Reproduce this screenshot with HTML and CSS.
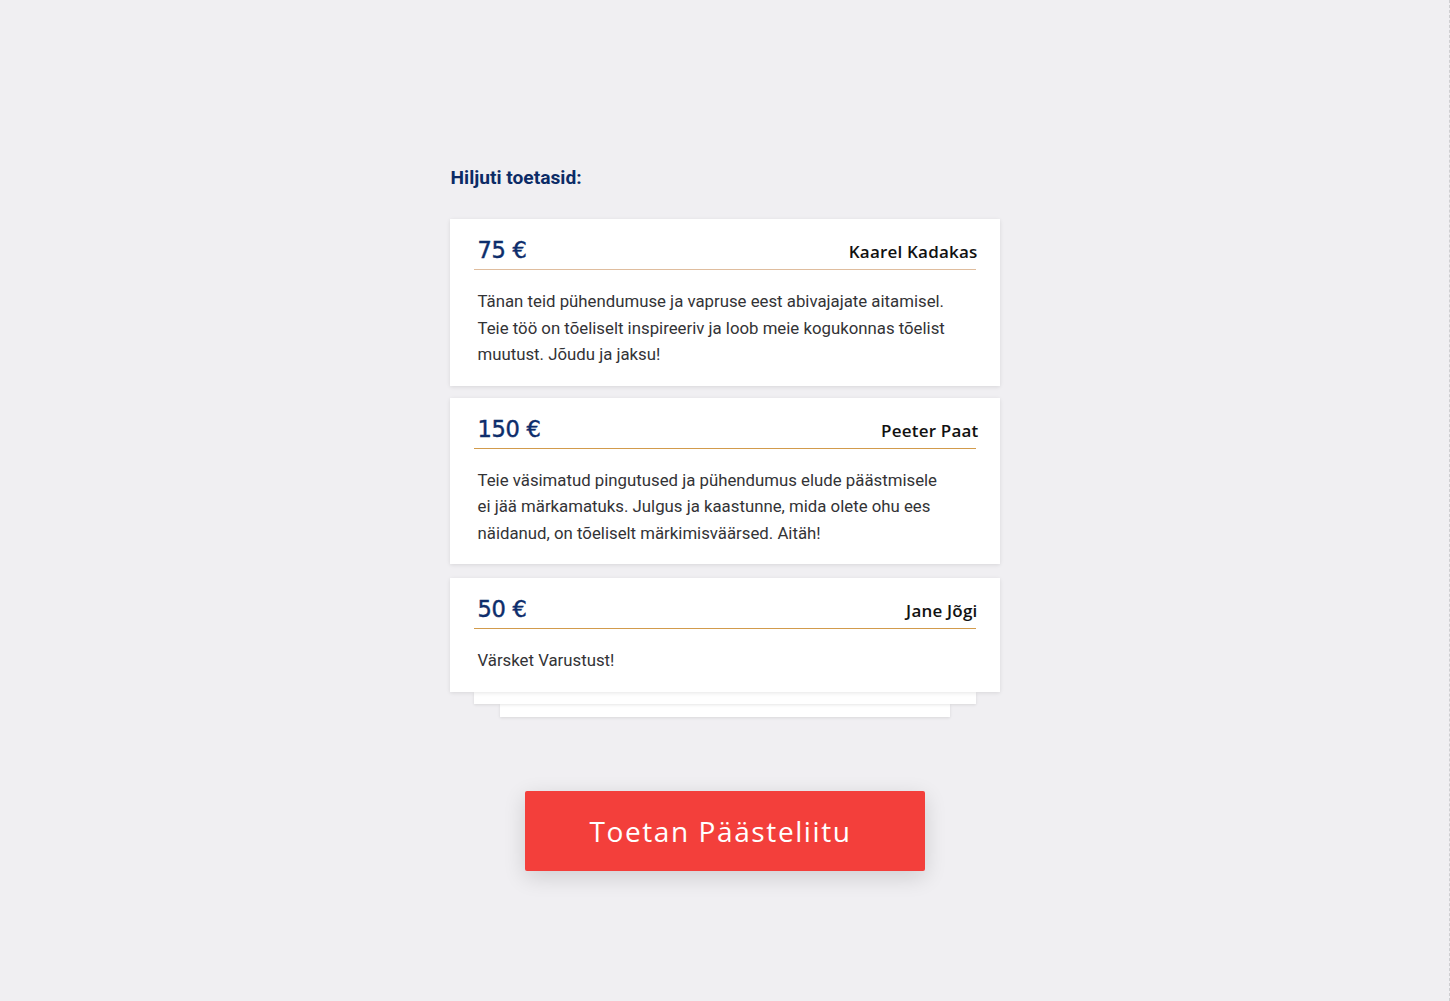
FILE: index.html
```html
<!DOCTYPE html>
<html lang="et">
<head>
<meta charset="utf-8">
<title>Hiljuti toetasid</title>
<link rel="stylesheet" href="styles.css">
</head>
<body>
<main class="page">
  <h2 class="title">Hiljuti toetasid:</h2>
  <div class="list">
    <article class="card">
      <div class="card-head head-light">
        <span class="amount">75 €</span>
        <span class="name">Kaarel Kadakas</span>
      </div>
      <p class="msg">Tänan teid pühendumuse ja vapruse eest abivajajate aitamisel. Teie töö on tõeliselt inspireeriv ja loob meie kogukonnas tõelist muutust. Jõudu ja jaksu!</p>
    </article>
    <article class="card">
      <div class="card-head">
        <span class="amount">150 €</span>
        <span class="name name-over">Peeter Paat</span>
      </div>
      <p class="msg">Teie väsimatud pingutused ja pühendumus elude päästmisele ei jää märkamatuks. Julgus ja kaastunne, mida olete ohu ees näidanud, on tõeliselt märkimisväärsed. Aitäh!</p>
    </article>
    <article class="card card-last">
      <div class="card-head">
        <span class="amount">50 €</span>
        <span class="name">Jane Jõgi</span>
      </div>
      <p class="msg">Värsket Varustust!</p>
    </article>
    <div class="stack">
      <div class="layer layer-1"></div>
      <div class="layer layer-2"></div>
    </div>
  </div>
  <div class="cta-wrap">
    <button class="cta" type="button">Toetan Päästeliitu</button>
  </div>
</main>
</body>
</html>
```

FILE: styles.css
```css
html, body {
  margin: 0;
  padding: 0;
}
body {
  background: #f0eff2;
  font-family: Roboto, "Liberation Sans", sans-serif;
  min-height: 1001px;
  box-sizing: border-box;
  border-right: 1px dashed #cfcfd2;
}
.page {
  width: 550px;
  margin: 0 auto;
  padding-top: 167px;
}
.title {
  margin: 0 0 30px 1px;
  font-size: 19.2px;
  line-height: 22px;
  font-weight: 700;
  color: #0b2b66;
}
.list {
  display: flex;
  flex-direction: column;
  gap: 12px;
}
.card {
  background: #fff;
  padding: 0 24px;
  box-shadow: 0 1px 4px rgba(0, 0, 0, 0.10);
  position: relative;
  z-index: 3;
}
.card-last {
  margin-top: 2px;
}
.card-head {
  height: 51px;
  box-sizing: border-box;
  padding: 0 0 8px 4px;
  display: flex;
  justify-content: space-between;
  align-items: flex-end;
  border-bottom: 1.5px solid #d29b4c;
}
.head-light {
  border-bottom-color: #dfbd9e;
}
.amount {
  font-family: "DejaVu Sans", sans-serif;
  font-size: 22.5px;
  line-height: 22px;
  font-weight: 400;
  color: #0d2d6b;
  letter-spacing: -0.3px;
  -webkit-text-stroke: 0.45px #0d2d6b;
}
.name {
  font-family: "Open Sans", sans-serif;
  font-size: 17px;
  line-height: 18px;
  font-weight: 600;
  color: #111;
  margin-right: -2px;
  letter-spacing: 0.2px;
}
.name-over {
  margin-right: -3px;
}
.msg {
  margin: 0;
  padding: 18px 4px 18px 4px;
  max-width: 474px;
  font-size: 16.8px;
  line-height: 26.5px;
  color: #333336;
}
.stack {
  display: flex;
  flex-direction: column;
  margin-top: -12px;
}
.layer {
  background: #fff;
  box-shadow: 0 1px 3px rgba(0, 0, 0, 0.10);
}
.layer-1 {
  margin: 0 24px;
  height: 12px;
  position: relative;
  z-index: 2;
}
.layer-2 {
  margin: 0 50px;
  height: 13px;
  position: relative;
  z-index: 1;
}
.cta-wrap {
  display: flex;
  justify-content: center;
  margin-top: 74px;
}
.cta {
  width: 400px;
  height: 80px;
  border: none;
  border-radius: 2px;
  background: #f33f3b;
  color: #fff;
  font-family: "Open Sans", sans-serif;
  font-size: 28px;
  font-weight: 400;
  letter-spacing: 1.6px;
  padding: 0 8px 0 0;
  box-shadow: 0 6px 22px rgba(0, 0, 0, 0.14);
  cursor: pointer;
}
```
